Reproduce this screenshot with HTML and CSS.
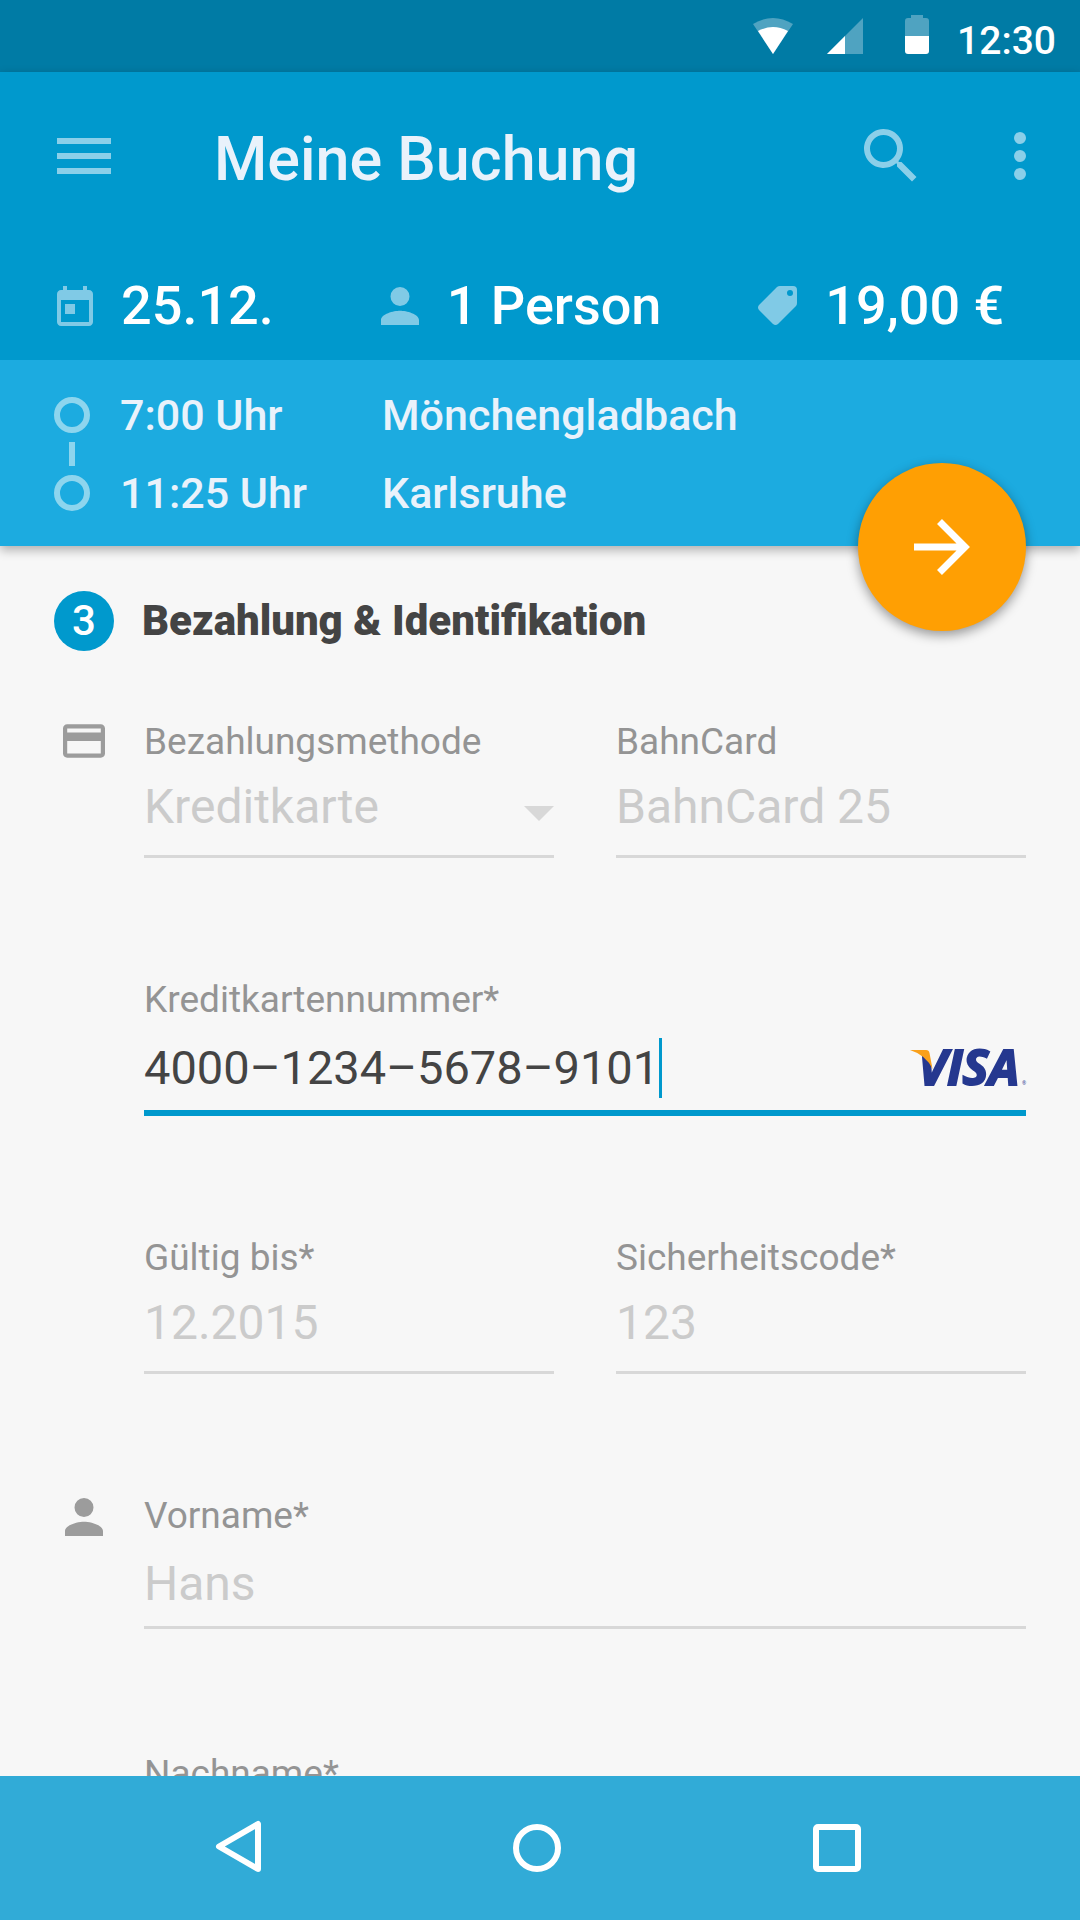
FILE: index.html
```html
<!DOCTYPE html>
<html lang="de">
<head>
<meta charset="utf-8">
<meta name="viewport" content="width=device-width, initial-scale=1">
<title>Meine Buchung</title>
<link rel="stylesheet" href="styles.css">
</head>
<body>
<div class="screen">
  <div class="status-bar">
    <svg class="status-wifi" width="40" height="36" viewBox="0 0 40 36" aria-hidden="true">
      <path fill="#4fa3c1" d="M0 6Q20-6 40 6L20 36z"/>
      <path fill="#fff" d="M5 13Q20 5 35 13L20 36z"/>
    </svg>
    <svg class="status-cell" width="36" height="36" viewBox="0 0 36 36" aria-hidden="true">
      <path fill="#4fa3c1" d="M0 36 36 0v36z"/>
      <path fill="#fff" d="M0 36 18 18v18z"/>
    </svg>
    <svg class="status-battery" width="24" height="39" viewBox="0 0 24 39" aria-hidden="true">
      <path fill="#4fa3c1" d="M6 0h12v3h3q3 0 3 3v15H0V6q0-3 3-3h3z"/>
      <path fill="#fff" d="M0 21h24v15q0 3-3 3H3q-3 0-3-3z"/>
    </svg>
    <span class="status-time">12:30</span>
  </div>

  <header class="header">
    <div class="app-bar">
      <button class="icon-button" type="button" aria-label="Menü">
        <svg width="72" height="72" viewBox="0 0 24 24"><path d="M3 18h18v-2H3v2zm0-5h18v-2H3v2zm0-7v2h18V6H3z"/></svg>
      </button>
      <h1 class="title">Meine Buchung</h1>
      <button class="icon-button search" type="button" aria-label="Suche">
        <svg width="72" height="72" viewBox="0 0 24 24"><path d="M15.5 14h-.8l-.27-.27A6.5 6.5 0 1 0 13.73 14.43l.27.27v.8l5 5 1.5-1.5zM9.5 14a4.5 4.5 0 1 1 0-9 4.5 4.5 0 0 1 0 9z"/></svg>
      </button>
      <button class="icon-button" type="button" aria-label="Mehr">
        <svg width="72" height="72" viewBox="0 0 24 24"><circle cx="12" cy="6" r="2"/><circle cx="12" cy="12" r="2"/><circle cx="12" cy="18" r="2"/></svg>
      </button>
    </div>

    <div class="summary">
      <div class="summary-item">
        <svg width="36" height="40" viewBox="3 1 18 20" aria-hidden="true"><path d="M19 3h-1V1h-2v2H8V1H6v2H5c-1.1 0-2 .9-2 2v14c0 1.1.9 2 2 2h14c1.1 0 2-.9 2-2V5c0-1.1-.9-2-2-2zm0 16H5V8h14v11zM7 10h5v5H7z"/></svg>
        <span>25.12.</span>
      </div>
      <div class="summary-item">
        <svg width="38" height="38" viewBox="4 4 16 16" aria-hidden="true"><path d="M12 12a4 4 0 1 0 0-8 4 4 0 0 0 0 8zm0 2c-2.67 0-8 1.34-8 4v2h16v-2c0-2.66-5.33-4-8-4z"/></svg>
        <span>1 Person</span>
      </div>
      <div class="summary-item">
        <svg width="39" height="39" viewBox="0 0 39 39" aria-hidden="true"><path fill-rule="evenodd" d="M22 0h13q4 0 4 4v13q0 2-1 3L20 38q-2.500 2-5 0L1 24q-2-2.500 0-5L19 1q1.300-1 3-1zM32 4a3 3 0 1 0 0 6 3 3 0 0 0 0-6z"/></svg>
        <span>19,00 €</span>
      </div>
    </div>

    <div class="route">
      <svg class="route-rail" width="36" height="114" viewBox="0 0 36 114" aria-hidden="true">
        <circle cx="18" cy="18" r="15"/><path d="M18 45v24"/><circle cx="18" cy="96" r="15"/>
      </svg>
      <div class="stops">
        <span>7:00 Uhr</span><span>Mönchengladbach</span>
        <span>11:25 Uhr</span><span>Karlsruhe</span>
      </div>
    </div>

    <button class="fab" type="button" aria-label="Weiter">
      <svg width="56" height="56" viewBox="0 0 56 56"><path d="M0 28h50M25.500 2.500 51 28 25.500 53.500"/></svg>
    </button>
  </header>

  <main class="content">
    <h2 class="step"><span class="step-number">3</span>Bezahlung &amp; Identifikation</h2>

    <form class="form">
      <div class="row">
        <svg class="row-icon" width="42" height="34" viewBox="2 4 20 16" aria-hidden="true"><path d="M20 4H4c-1.110 0-2 .89-2 2v12c0 1.110.89 2 2 2h16c1.110 0 2-.89 2-2V6c0-1.110-.89-2-2-2zm0 14H4v-6h16v6zm0-10H4V6h16v2z"/></svg>
        <div class="pair">
          <div class="field">
            <label for="method">Bezahlungsmethode</label>
            <div class="control">
              <select id="method"><option>Kreditkarte</option></select>
              <svg class="arrow" width="30" height="15" viewBox="0 0 30 15" aria-hidden="true"><path d="M0 0h30L15 15z"/></svg>
            </div>
          </div>
          <div class="field">
            <label for="bahncard">BahnCard</label>
            <div class="control"><input id="bahncard" type="text" placeholder="BahnCard 25"></div>
          </div>
        </div>
      </div>

      <div class="row">
        <div class="field field-wide field-active">
          <label for="number">Kreditkartennummer*</label>
          <div class="control">
            <input class="number" id="number" type="text" inputmode="numeric" value="4000–1234–5678–9101">
            <span class="caret"></span>
            <svg class="visa" width="116" height="40" viewBox="0 0 116 40" role="img" aria-label="Visa">
              <text class="visa-name" x="8" y="37">VISA</text>
              <path fill="#f7f7f7" d="M4 0h18v18L16 8z"/>
              <path fill="#f9a01b" d="M0 2h16q3 0 3.500 3l3 16Q16 7 0 2z"/>
              <text class="visa-mark" x="112" y="37">®</text>
            </svg>
          </div>
        </div>
      </div>

      <div class="row">
        <div class="pair">
          <div class="field">
            <label for="expiry">Gültig bis*</label>
            <div class="control"><input id="expiry" type="text" placeholder="12.2015"></div>
          </div>
          <div class="field">
            <label for="code">Sicherheitscode*</label>
            <div class="control"><input id="code" type="text" placeholder="123"></div>
          </div>
        </div>
      </div>

      <div class="row">
        <svg class="row-icon" width="38" height="38" viewBox="4 4 16 16" aria-hidden="true"><path d="M12 12a4 4 0 1 0 0-8 4 4 0 0 0 0 8zm0 2c-2.670 0-8 1.340-8 4v2h16v-2c0-2.660-5.330-4-8-4z"/></svg>
        <div class="field field-wide">
          <label for="first">Vorname*</label>
          <div class="control"><input id="first" type="text" placeholder="Hans"></div>
        </div>
      </div>

      <div class="row">
        <div class="field field-wide">
          <label for="last">Nachname*</label>
          <div class="control"><input id="last" type="text"></div>
        </div>
      </div>
    </form>
  </main>

  <nav class="nav-bar" aria-label="System">
    <button type="button" aria-label="Zurück">
      <svg width="48" height="52" viewBox="0 0 48 52"><path d="M45 2v45L6 24.500z"/></svg>
    </button>
    <button type="button" aria-label="Startseite">
      <svg width="48" height="52" viewBox="0 0 48 52"><circle cx="24" cy="26" r="21"/></svg>
    </button>
    <button type="button" aria-label="Übersicht">
      <svg width="48" height="52" viewBox="0 0 48 52"><rect x="3" y="5" width="42" height="42" rx="2"/></svg>
    </button>
  </nav>
</div>
</body>
</html>
```
FILE: styles.css
```css
* {
  box-sizing: border-box;
}

body {
  margin: 0;
  font-family: Roboto, "Liberation Sans", sans-serif;
  background: #f7f7f7;
  color: #444;
}

svg {
  display: block;
  flex: none;
  overflow: visible;
}

button {
  display: grid;
  place-items: center;
  padding: 0;
  border: 0;
  background: none;
  cursor: pointer;
}

.screen {
  display: flex;
  flex-direction: column;
  height: 100vh;
}

/* Status bar */
.status-bar {
  display: flex;
  flex: none;
  align-items: flex-end;
  justify-content: flex-end;
  height: 72px;
  padding: 0 24px 18px;
  background: #007ba5;
}

.status-wifi {
  margin-right: 34px;
}

.status-cell {
  margin-right: 42px;
}

.status-battery {
  margin-right: 28px;
}

.status-time {
  height: 36px;
  color: #fff;
  font-size: 39px;
  font-weight: 500;
  line-height: 46px;
}

/* Header */
.header {
  position: relative;
  z-index: 1;
  flex: none;
  background: #0099cd;
  box-shadow: 0 4px 10px rgba(0, 0, 0, 0.3);
}

.app-bar {
  display: flex;
  align-items: center;
  height: 168px;
  padding: 0 24px 0 48px;
}

.icon-button {
  fill: #8bcfe9;
}

.search {
  margin-right: 57px;
}

.title {
  flex: 1;
  margin: 0;
  padding: 6px 0 0 94px;
  color: #e9f2fb;
  font-size: 61px;
  font-weight: 500;
  line-height: 72px;
}

.summary {
  display: grid;
  grid-template-columns: 6fr 7fr 5fr;
  align-items: center;
  height: 120px;
  padding: 11px 52px 0 57px;
  color: #fff;
  font-size: 54px;
  font-weight: 500;
  line-height: 64px;
  white-space: nowrap;
}

.summary-item {
  display: flex;
  align-items: center;
  gap: 28px;
  fill: #80cae6;
}

.route {
  display: flex;
  align-items: center;
  gap: 30px;
  padding: 30px 54px 28px;
  background: #1cabe0;
}

.route-rail {
  fill: none;
  stroke: #8dd5ee;
  stroke-width: 6;
}

.stops {
  display: grid;
  grid-template-columns: 262px 1fr;
  row-gap: 28px;
  flex: 1;
  color: #e9f2fb;
  font-size: 43px;
  font-weight: 500;
  line-height: 50px;
}

.fab {
  position: absolute;
  right: 54px;
  bottom: -85px;
  width: 168px;
  height: 168px;
  border-radius: 50%;
  background: #ff9f03;
  box-shadow: 0 4px 12px rgba(0, 0, 0, 0.4);
  fill: none;
  stroke: #fff;
  stroke-width: 7;
}

/* Booking form */
.content {
  flex: 1;
  min-height: 0;
  padding: 45px 54px 0;
  overflow-y: auto;
  scrollbar-width: none;
}

.step {
  display: flex;
  align-items: center;
  gap: 28px;
  margin: 0 0 69px;
  font-size: 42px;
  font-weight: 900;
  line-height: 50px;
}

.step-number {
  width: 60px;
  border-radius: 50%;
  background: #0099cd;
  color: #fff;
  font-weight: 500;
  line-height: 60px;
  text-align: center;
}

.form {
  display: flex;
  flex-direction: column;
  gap: 120px;
}

.row {
  display: grid;
  grid-template-columns: 60px minmax(0, 1fr);
  column-gap: 30px;
  min-height: 138px;
}

.row-icon {
  grid-column: 1;
  justify-self: center;
  margin-top: 4px;
  fill: #9c9c9c;
}

.pair,
.field-wide {
  grid-column: 2;
}

.pair {
  display: grid;
  grid-template-columns: repeat(2, minmax(0, 1fr));
  column-gap: 62px;
}

.field label {
  display: block;
  margin-bottom: 15px;
  color: #949494;
  font-size: 37px;
  line-height: 44px;
}

.field-wide label {
  margin-bottom: 18px;
}

.control {
  display: flex;
  align-items: center;
  height: 79px;
  padding-bottom: 20px;
  border-bottom: 3px solid #d8d8d8;
}

.field-wide .control {
  height: 73px;
  padding-bottom: 14px;
}

.control input,
.control select {
  flex: 1;
  min-width: 0;
  height: 56px;
  padding: 0;
  border: 0;
  outline: 0;
  appearance: none;
  background: none;
  color: #444;
  font: 48px/56px Roboto, "Liberation Sans", sans-serif;
}

.control select,
.control input::placeholder {
  color: #cbcbcb;
  opacity: 1;
}

.arrow {
  margin-top: 12px;
  fill: #d8d8d8;
}

.field-wide.field-active .control {
  height: 76px;
  border-bottom: 6px solid #0099cd;
}

.control .number {
  flex: none;
  font-size: 47px;
  field-sizing: content;
}

.caret {
  width: 3px;
  height: 60px;
  background: #0099cd;
}

.visa {
  margin-left: auto;
}

.visa-name {
  fill: #25388f;
  stroke: #25388f;
  stroke-width: 2;
  font: italic 700 49px "Open Sans", sans-serif;
}

.visa-mark {
  fill: #25388f;
  font: 5px "Open Sans", sans-serif;
}

/* System navigation */
.nav-bar {
  display: flex;
  flex: none;
  align-items: center;
  justify-content: center;
  gap: 252px;
  height: 144px;
  padding-right: 6px;
  background: #31abd7;
  fill: none;
  stroke: #fff;
  stroke-width: 6;
  stroke-linejoin: round;
}

.fab svg {
  stroke-linejoin: miter;
}
```
